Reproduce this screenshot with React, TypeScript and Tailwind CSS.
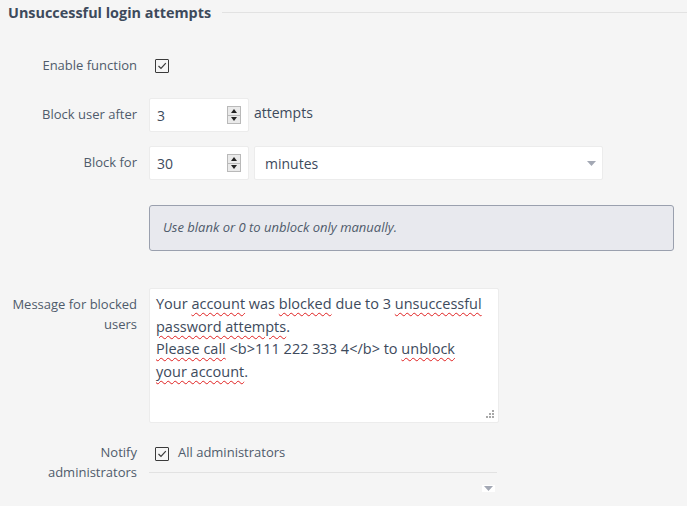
import React from 'react';

const font = { fontFamily: '"Open Sans", "Noto Sans", sans-serif' };

const Check = () => (
  <span className="w-[14px] h-[14px] border border-[#3a3a3a] rounded-[1px] flex items-center justify-center bg-[#f5f5f5]">
    <svg width="10" height="10" viewBox="0 0 10 10" fill="none" stroke="#3a3a3a" strokeWidth="1.2">
      <polyline points="1.5,5 4,7.5 8.8,2.2" />
    </svg>
  </span>
);

const Spinner = () => (
  <span className="absolute right-[7px] top-[7px] w-[14px] h-[18px] border border-[#b9b9b9] bg-[#eaeaea] flex flex-col">
    <span className="flex-1 flex items-center justify-center border-b border-[#b9b9b9]">
      <svg width="6" height="4" viewBox="0 0 6 4"><polygon points="0,4 3,0 6,4" fill="#222" /></svg>
    </span>
    <span className="flex-1 flex items-center justify-center">
      <svg width="6" height="4" viewBox="0 0 6 4"><polygon points="0,0 3,4 6,0" fill="#222" /></svg>
    </span>
  </span>
);

const NumInput = ({ value }: { value: string }) => (
  <div className="relative w-[100px] h-[34px] bg-white border border-[#ececec] rounded-[2px] flex items-center pl-[7px] text-[14px] text-[#3d4a5c]">
    {value}
    <Spinner />
  </div>
);

const Caret = () => (
  <svg width="9" height="5" viewBox="0 0 9 5"><polygon points="0,0 9,0 4.5,5" fill="#a3a8b4" /></svg>
);

const W = ({ children }: { children: React.ReactNode }) => (
  <span className="underline decoration-wavy decoration-[#e02020] decoration-1 underline-offset-[3px]">{children}</span>
);

export default function App() {
  return (
    <div className="w-[687px] h-[506px] bg-[#f5f5f5] overflow-hidden text-[#4a5568]" style={font}>
      <div className="flex items-center h-[25px]">
        <span className="pl-[8px] text-[14.4px] font-bold text-[#3d4a5c]">Unsuccessful login attempts</span>
        <span className="flex-1 ml-[11px] h-px bg-[#e2e2e2]" />
      </div>

      <div className="flex items-center mt-[31px] h-[20px]">
        <span className="w-[137px] text-right text-[13px] text-[#4f5b6b]">Enable function</span>
        <span className="ml-[18px]"><Check /></span>
      </div>

      <div className="flex items-center mt-[22px]">
        <span className="w-[137px] text-right text-[13px] text-[#4f5b6b]">Block user after</span>
        <span className="ml-[12px]"><NumInput value="3" /></span>
        <span className="ml-[5px] text-[14px] text-[#3d4a5c] -mt-[5px]">attempts</span>
      </div>

      <div className="flex items-center mt-[14px]">
        <span className="w-[137px] text-right text-[13px] text-[#4f5b6b]">Block for</span>
        <span className="ml-[12px]"><NumInput value="30" /></span>
        <div className="ml-[5px] w-[349px] h-[34px] bg-white border border-[#ececec] rounded-[2px] flex items-center justify-between pl-[10px] pr-[6px] text-[14px] text-[#3d4a5c]">
          minutes
          <Caret />
        </div>
      </div>

      <div className="ml-[149px] mt-[25px] w-[525px] h-[46px] bg-[#e8e9ee] border border-[#9aa0ae] rounded-[3px] flex items-center pl-[13px] text-[13px] italic text-[#4f5b6b]">
        Use blank or 0 to unblock only manually.
      </div>

      <div className="flex mt-[37px]">
        <span className="w-[137px] text-right text-[13px] leading-[20px] text-[#4f5b6b] pt-[6px]">Message for blocked<br />users</span>
        <div className="relative ml-[12px] w-[350px] h-[135px] bg-white border border-[#ececec] rounded-[2px] px-[6px] pt-[4px] text-[14.5px] leading-[22.7px] text-[#3d4a5c]">
          Your <W>account</W> was <W>blocked</W> due to 3 <W>unsuccessful</W><br />
          <W>password attempts</W>.<br />
          <W>Please call</W> &lt;b&gt;111 222 333 4&lt;/b&gt; to <W>unblock</W><br />
          <W>your account</W>.
          <svg className="absolute right-[3px] bottom-[3px]" width="9" height="9" viewBox="0 0 9 9" fill="#a8a8a8">
            <rect x="6" y="0" width="2" height="2" />
            <rect x="3" y="3" width="2" height="2" />
            <rect x="6" y="3" width="2" height="2" />
            <rect x="0" y="6" width="2" height="2" />
            <rect x="3" y="6" width="2" height="2" />
            <rect x="6" y="6" width="2" height="2" />
          </svg>
        </div>
      </div>

      <div className="flex mt-[22px]">
        <span className="w-[137px] text-right text-[13px] leading-[20px] text-[#4f5b6b] -mt-[3px]">Notify<br />administrators</span>
        <div className="ml-[12px] w-[348px]">
          <div className="flex items-center h-[20px] pl-[6px] -mt-[1px]">
            <Check />
            <span className="ml-[9px] text-[13px] text-[#4f5b6b] -mt-[2px]">All administrators</span>
          </div>
          <div className="mt-[8px] h-px bg-[#e2e2e2]" />
          <div className="h-[30px] flex items-center justify-end pr-[2px]">
            <span className="bg-white px-[2px] py-[1px] flex"><Caret /></span>
          </div>
        </div>
      </div>
    </div>
  );
}
